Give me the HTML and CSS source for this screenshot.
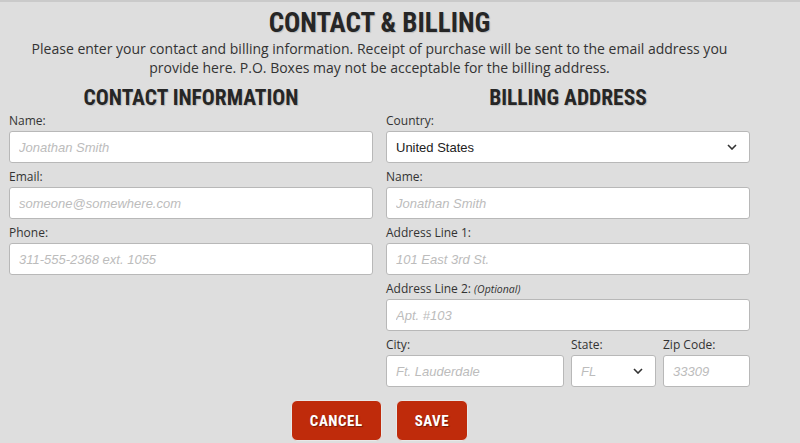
FILE: index.html
```html
<!DOCTYPE html>
<html lang="en">
<head>
    <meta charset="UTF-8">
    <meta name="viewport" content="width=device-width, initial-scale=1.0">
    <title>Contact &amp; Billing</title>
    <link rel="stylesheet" href="styles.css">
</head>
<body>
    <div class="checkout">
        <h1 class="title">CONTACT &amp; BILLING</h1>
        <p class="intro">Please enter your contact and billing information. Receipt of purchase will be sent to the email address you provide here. P.O. Boxes may not be acceptable for the billing address.</p>

        <div class="columns">
            <div class="column">
                <h2 class="section-title">CONTACT INFORMATION</h2>
                <div class="field">
                    <label>Name:</label>
                    <input type="text" placeholder="Jonathan Smith">
                </div>
                <div class="field">
                    <label>Email:</label>
                    <input type="text" placeholder="someone@somewhere.com">
                </div>
                <div class="field">
                    <label>Phone:</label>
                    <input type="text" placeholder="311-555-2368 ext. 1055">
                </div>
            </div>

            <div class="column">
                <h2 class="section-title">BILLING ADDRESS</h2>
                <div class="field">
                    <label>Country:</label>
                    <div class="select-wrap">
                        <select class="select">
                            <option>United States</option>
                        </select>
                        <svg class="chevron" width="10" height="6" viewBox="0 0 10 6"><path d="M1 1l4 4 4-4" fill="none" stroke="#333" stroke-width="1.6"/></svg>
                    </div>
                </div>
                <div class="field">
                    <label>Name:</label>
                    <input type="text" placeholder="Jonathan Smith">
                </div>
                <div class="field">
                    <label>Address Line 1:</label>
                    <input type="text" placeholder="101 East 3rd St.">
                </div>
                <div class="field">
                    <label>Address Line 2: <em>(Optional)</em></label>
                    <input type="text" placeholder="Apt. #103">
                </div>
                <div class="city-row">
                    <div class="field">
                        <label>City:</label>
                        <input type="text" placeholder="Ft. Lauderdale">
                    </div>
                    <div class="field">
                        <label>State:</label>
                        <div class="select-wrap">
                            <select class="select empty">
                                <option>FL</option>
                            </select>
                            <svg class="chevron" width="10" height="6" viewBox="0 0 10 6"><path d="M1 1l4 4 4-4" fill="none" stroke="#333" stroke-width="1.6"/></svg>
                        </div>
                    </div>
                    <div class="field">
                        <label>Zip Code:</label>
                        <input type="text" placeholder="33309">
                    </div>
                </div>
            </div>
        </div>

        <div class="actions">
            <button class="btn">CANCEL</button>
            <button class="btn">SAVE</button>
        </div>
    </div>
</body>
</html>
```

FILE: styles.css
```css
body {
    margin: 0;
    background-color: #dedede;
    border-top: 2px solid #cacaca;
    font-family: "Open Sans", "DejaVu Sans", sans-serif;
    color: #2b2b2b;
}
.checkout {
    width: 741px;
    padding-left: 9px;
}
.title {
    margin: 6px 0 0;
    text-align: center;
    font-family: "Roboto Condensed", "Liberation Sans Narrow", "DejaVu Sans Condensed", Roboto, sans-serif;
    font-stretch: condensed;
    font-size: 27px;
    line-height: 31px;
    font-weight: 700;
    color: #262626;
    text-shadow: 1px 1px 1px rgba(0, 0, 0, 0.15);
}
.intro {
    margin: 0 auto;
    width: 730px;
    text-align: center;
    font-size: 14px;
    line-height: 19px;
    color: #333;
}
.columns {
    display: grid;
    grid-template-columns: 1fr 1fr;
    gap: 13px;
    margin-top: 8px;
}
.section-title {
    margin: 0 0 1px;
    text-align: center;
    font-family: "Roboto Condensed", "Liberation Sans Narrow", "DejaVu Sans Condensed", Roboto, sans-serif;
    font-stretch: condensed;
    font-size: 21.5px;
    line-height: 25px;
    font-weight: 700;
    color: #262626;
    text-shadow: 1px 1px 1px rgba(0, 0, 0, 0.15);
}
.field {
    margin-bottom: 4px;
}
.field label {
    display: block;
    height: 20px;
    line-height: 20px;
    font-size: 12px;
    color: #333;
}
.field label em {
    font-size: 10.5px;
}
.field input,
.select {
    box-sizing: border-box;
    display: block;
    width: 100%;
    height: 32px;
    margin: 0;
    padding: 0 9px;
    background: #fff;
    border: 1px solid #b8b8b8;
    border-radius: 3px;
    font-family: "Liberation Sans", Arial, sans-serif;
    font-size: 13px;
    color: #222;
}
.field input::placeholder {
    font-style: italic;
    color: #bcbcbc;
}
.select {
    appearance: none;
    -webkit-appearance: none;
}
.select.empty {
    font-style: italic;
    color: #bcbcbc;
}
.select-wrap {
    position: relative;
}
.chevron {
    position: absolute;
    right: 13px;
    top: 13px;
    pointer-events: none;
}
.city-row {
    display: grid;
    grid-template-columns: 1fr 85px 87px;
    gap: 7px;
}
.actions {
    display: flex;
    justify-content: center;
    gap: 14px;
    margin-top: 9px;
}
.btn {
    height: 41px;
    padding: 0 18px;
    background: #bf2b0b;
    border: 1px solid #e8e8e8;
    border-radius: 6px;
    color: #fff;
    font-family: "Roboto Condensed", "Liberation Sans Narrow", "DejaVu Sans Condensed", Roboto, sans-serif;
    font-stretch: condensed;
    font-size: 15px;
    font-weight: 700;
    letter-spacing: 0.5px;
    text-shadow: 1px 1px 1px rgba(0, 0, 0, 0.4);
    cursor: pointer;
}
```
